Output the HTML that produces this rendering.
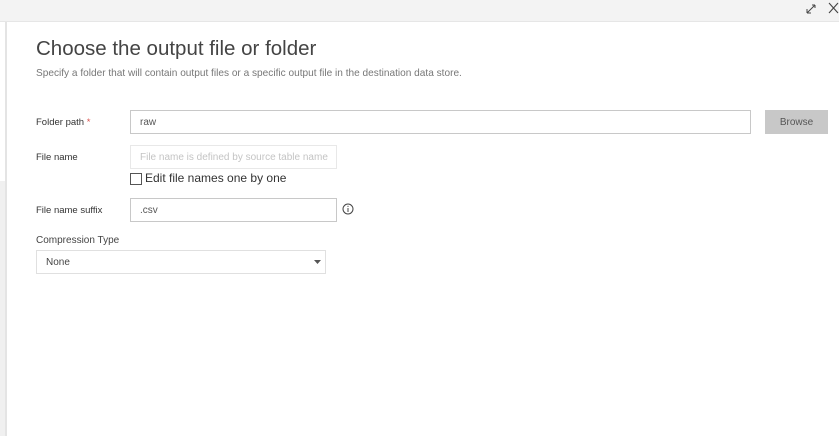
<!DOCTYPE html>
<html><head><style>
*{margin:0;padding:0;box-sizing:border-box}
body{width:839px;height:436px;overflow:hidden;background:#fff;font-family:"Liberation Sans",sans-serif;position:relative;color:#333}
.top{position:absolute;left:0;top:0;width:839px;height:22px;background:#f3f3f3;border-bottom:1px solid #e6e6e6}
.ls{position:absolute;left:0;top:181px;width:5px;height:255px;background:#f0f0f0}
.lb{position:absolute;left:5px;top:22px;width:2px;height:414px;background:#e4e4e4}
.a{position:absolute;white-space:nowrap}
.in{position:absolute;border:1px solid #c8c8c8;background:#fff;font-size:10px;padding-left:9px;display:flex;align-items:center}
</style></head><body>
<div class="top"></div>
<div class="ls"></div><div class="lb"></div>
<svg class="a" style="left:804px;top:2px" width="14" height="14" viewBox="0 0 14 14"><path d="M3 11L11 3M3 11V7M3 11H7M11 3H8M11 3V6" stroke="#444" stroke-width="1" fill="none"/></svg>
<svg class="a" style="left:828px;top:2px" width="11" height="12" viewBox="0 0 11 12"><path d="M1 1L10 11M10 1L1 11" stroke="#444" stroke-width="1.1"/></svg>
<div class="a" style="left:36px;top:37px;font-size:20.5px;color:#444">Choose the output file or folder</div>
<div class="a" style="left:36px;top:68px;font-size:10.1px;color:#777">Specify a folder that will contain output files or a specific output file in the destination data store.</div>
<div class="a" style="left:36px;top:117px;font-size:9.5px;color:#333">Folder path <span style="color:#d9534f">*</span></div>
<div class="in" style="left:130px;top:110px;width:621px;height:24px;color:#555">raw</div>
<div class="a" style="left:765px;top:110px;width:63px;height:24px;background:#c8c8c8;font-size:10px;color:#555;display:flex;align-items:center;justify-content:center">Browse</div>
<div class="a" style="left:36px;top:152px;font-size:9.5px">File name</div>
<div class="in" style="left:130px;top:145px;width:207px;height:24px;border-color:#e8e8e8;color:#c4c4c4">File name is defined by source table name</div>
<div class="a" style="left:130px;top:173px;width:12px;height:12px;border:1px solid #555"></div>
<div class="a" style="left:145px;top:171px;font-size:12px;color:#333">Edit file names one by one</div>
<div class="a" style="left:36px;top:205px;font-size:9.5px">File name suffix</div>
<div class="in" style="left:130px;top:198px;width:207px;height:24px;color:#555">.csv</div>
<svg class="a" style="left:342px;top:203px" width="12" height="12" viewBox="0 0 12 12"><circle cx="6" cy="6" r="5" stroke="#444" fill="none"/><path d="M6 5V9" stroke="#444"/><circle cx="6" cy="3.3" r=".6" fill="#444"/></svg>
<div class="a" style="left:36px;top:235px;font-size:10px;color:#444">Compression Type</div>
<div class="in" style="left:36px;top:250px;width:290px;height:24px;border-color:#e0e0e0;color:#444;font-size:10px">None</div>
<svg class="a" style="left:314px;top:260px" width="7" height="5" viewBox="0 0 7 5"><path d="M0 0H7L3.5 4Z" fill="#555"/></svg>
</body></html>
